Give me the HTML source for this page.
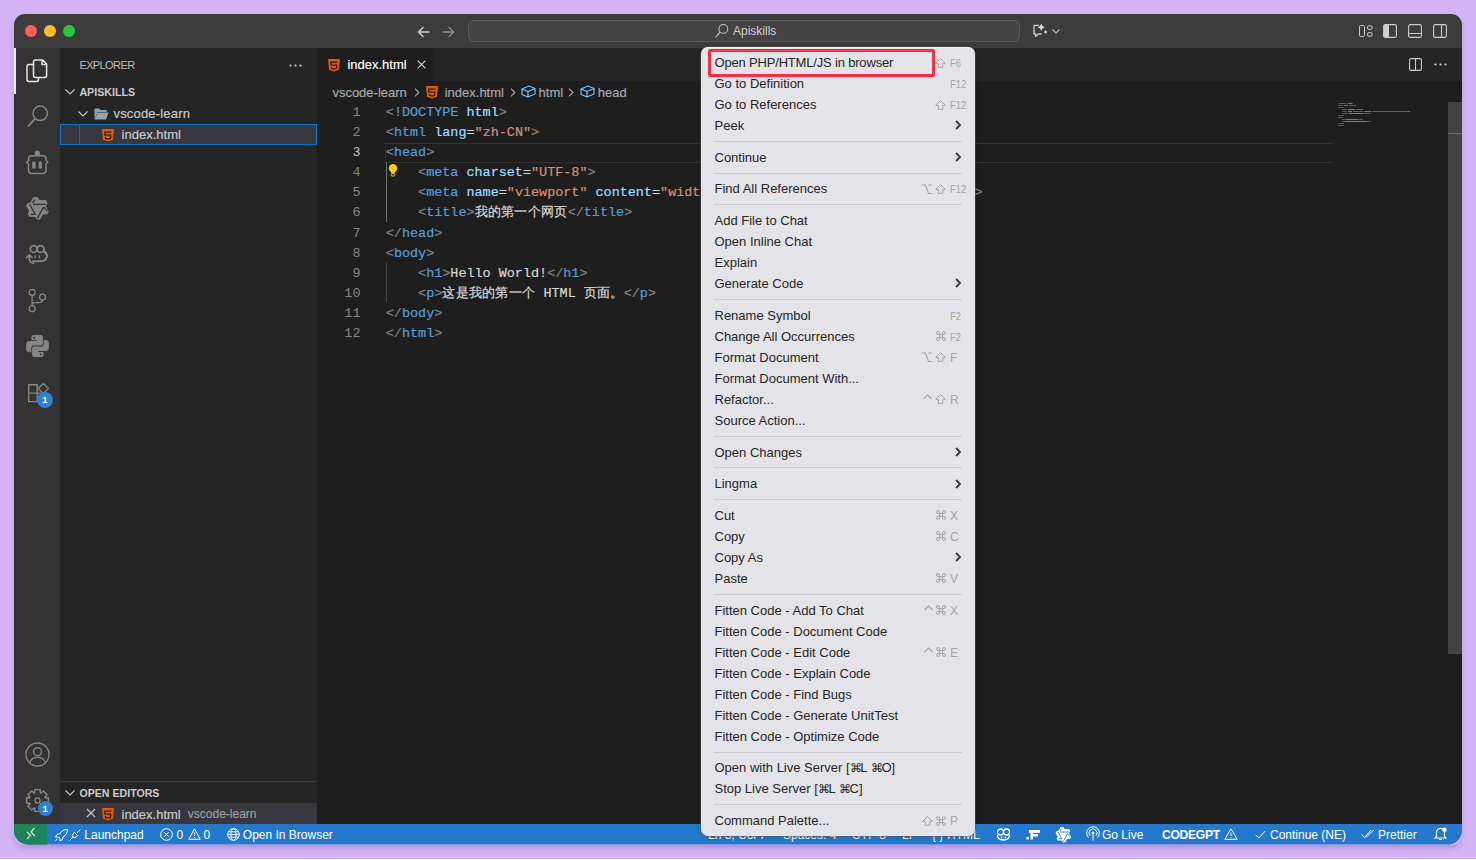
<!DOCTYPE html>
<html><head><meta charset="utf-8"><style>
*{margin:0;padding:0;box-sizing:border-box}
html,body{width:1476px;height:860px;overflow:hidden;background:#d4b4f6;font-family:"Liberation Sans",sans-serif}
.a{position:absolute}
#win{position:absolute;left:0;top:0;width:1476px;height:860px;clip-path:inset(14px 14px 15.4px 14px round 11px 11px 14px 14px)}
svg{position:absolute;overflow:visible}
.dot{position:absolute;width:12px;height:12px;border-radius:50%;top:24.7px}
.mi{position:absolute;left:13.5px;height:21px;line-height:21px;font-size:13px;color:#262626;white-space:pre}
.ks{position:absolute;left:249px;height:21px;line-height:23.2px;font-size:9.4px;transform:scaleY(1.08);color:#a5a4a9;white-space:pre}
.kl{position:absolute;left:249px;height:21px;line-height:23px;font-size:12px;color:#a5a4a9;white-space:pre}
.sep{position:absolute;left:13px;width:248px;height:1px;background:#cdcbd0}
.code{-webkit-text-stroke:.22px currentColor;position:absolute;left:385.8px;font-family:"Liberation Mono",monospace;font-size:13.45px;height:20px;line-height:20px;white-space:pre;color:#d4d4d4}
.ln{position:absolute;width:60px;left:300.5px;text-align:right;font-family:"Liberation Mono",monospace;font-size:13.45px;height:20px;line-height:20px;color:#858585}
.p{color:#808080}.t{color:#569cd6}.at{color:#9cdcfe}.s{color:#ce9178}.w{color:#d4d4d4}
.cj{font-size:13.24px;letter-spacing:.3px}
.st{position:absolute;top:825.2px;height:21px;line-height:21px;font-size:12px;color:#fff;white-space:pre}
.sb{-webkit-text-stroke:.15px currentColor;position:absolute;height:22px;line-height:22px;font-size:13px;color:#cccccc;white-space:pre}
</style></head><body>
<div class="a" style="left:14px;top:14px;width:1448px;height:830.6px;border-radius:11px;box-shadow:0 4px 7px -2px rgba(70,30,110,.3)"></div>
<div id="win">
<div class="a" style="left:0;top:0;width:1476px;height:48px;background:#3c3c3c"></div>
<div class="dot" style="left:24.7px;background:#fe5f57"></div><div class="dot" style="left:43.8px;background:#febc2e"></div><div class="dot" style="left:63px;background:#28c840"></div>
<div class="a" style="left:0;top:48px;width:60px;height:776px;background:#333333"></div>
<div class="a" style="left:14px;top:48px;width:2px;height:46px;background:#e8e8e8"></div>
<div class="a" style="left:60px;top:48px;width:257px;height:776px;background:#252526"></div>
<div class="a" style="left:317px;top:48px;width:1159px;height:33px;background:#252526"></div>
<div class="a" style="left:317px;top:48px;width:117px;height:33px;background:#1e1e1e"></div>
<div class="a" style="left:317px;top:81px;width:1159px;height:743px;background:#1e1e1e"></div>
<div class="a" style="left:0;top:824px;width:1476px;height:36px;background:#2479cc"></div>
<div class="a" style="left:0;top:824px;width:47px;height:36px;background:#1e845a"></div>
<div class="a" style="left:385px;top:143px;width:948px;height:20px;border-top:1px solid #303030;border-bottom:1px solid #303030;border-left:1px solid #303030"></div>
<div class="a" style="left:386px;top:162px;width:1px;height:60px;background:#707070"></div>
<div class="a" style="left:386px;top:262px;width:1px;height:40px;background:#404040"></div>
<div class="ln" style="top:103.2px;color:#858585">1</div><div class="code" style="top:103.2px"><span class="p">&lt;</span><span class="t">!DOCTYPE</span> <span class="at">html</span><span class="p">&gt;</span></div>
<div class="ln" style="top:123.25px;color:#858585">2</div><div class="code" style="top:123.25px"><span class="p">&lt;</span><span class="t">html</span> <span class="at">lang</span>=<span class="s">&quot;zh-CN&quot;</span><span class="p">&gt;</span></div>
<div class="ln" style="top:143.3px;color:#c6c6c6">3</div><div class="code" style="top:143.3px"><span class="p">&lt;</span><span class="t">head</span><span class="p">&gt;</span></div>
<div class="ln" style="top:163.35000000000002px;color:#858585">4</div><div class="code" style="top:163.35000000000002px">    <span class="p">&lt;</span><span class="t">meta</span> <span class="at">charset</span>=<span class="s">&quot;UTF-8&quot;</span><span class="p">&gt;</span></div>
<div class="ln" style="top:183.4px;color:#858585">5</div><div class="code" style="top:183.4px">    <span class="p">&lt;</span><span class="t">meta</span> <span class="at">name</span>=<span class="s">&quot;viewport&quot;</span> <span class="at">content</span>=<span class="s">&quot;width=device-width, initial-scale=1.0&quot;</span><span class="p">&gt;</span></div>
<div class="ln" style="top:203.45px;color:#858585">6</div><div class="code" style="top:203.45px">    <span class="p">&lt;</span><span class="t">title</span><span class="p">&gt;</span><span class="cj">我的第一个网页</span><span class="p">&lt;/</span><span class="t">title</span><span class="p">&gt;</span></div>
<div class="ln" style="top:223.5px;color:#858585">7</div><div class="code" style="top:223.5px"><span class="p">&lt;/</span><span class="t">head</span><span class="p">&gt;</span></div>
<div class="ln" style="top:243.55px;color:#858585">8</div><div class="code" style="top:243.55px"><span class="p">&lt;</span><span class="t">body</span><span class="p">&gt;</span></div>
<div class="ln" style="top:263.6px;color:#858585">9</div><div class="code" style="top:263.6px">    <span class="p">&lt;</span><span class="t">h1</span><span class="p">&gt;</span>Hello World!<span class="p">&lt;/</span><span class="t">h1</span><span class="p">&gt;</span></div>
<div class="ln" style="top:283.65000000000003px;color:#858585">10</div><div class="code" style="top:283.65000000000003px">    <span class="p">&lt;</span><span class="t">p</span><span class="p">&gt;</span><span class="cj">这是我的第一个</span> HTML <span class="cj">页面。</span><span class="p">&lt;/</span><span class="t">p</span><span class="p">&gt;</span></div>
<div class="ln" style="top:303.7px;color:#858585">11</div><div class="code" style="top:303.7px"><span class="p">&lt;/</span><span class="t">body</span><span class="p">&gt;</span></div>
<div class="ln" style="top:323.75px;color:#858585">12</div><div class="code" style="top:323.75px"><span class="p">&lt;/</span><span class="t">html</span><span class="p">&gt;</span></div>
<svg style="left:387.2px;top:163.2px" width="12" height="14" viewBox="0 0 12 14"><path d="M6 1a4.2 4.2 0 0 0-2.6 7.5c.5.5.8 1 .8 1.6h3.6c0-.6.3-1.1.8-1.6A4.2 4.2 0 0 0 6 1z" fill="#ffcc00"/><rect x="4.2" y="10.6" width="3.6" height="2.4" rx=".6" fill="none" stroke="#ffcc00" stroke-width="1"/></svg>
<svg style="left:417px;top:25.7px" width="13" height="12" viewBox="0 0 13 12"><path d="M12.5 6 H1.5 M6.5 1 L1.5 6 L6.5 11" fill="none" stroke="#cccccc" stroke-width="1.3"/></svg><svg style="left:442px;top:25.7px" width="13" height="12" viewBox="0 0 13 12"><path d="M.5 6 H11.5 M6.5 1 L11.5 6 L6.5 11" fill="none" stroke="#8a8a8a" stroke-width="1.3"/></svg>
<div class="a" style="left:468px;top:19.7px;width:552px;height:22.8px;border:1px solid #595959;background:#434343;border-radius:6px"></div>
<svg style="left:715px;top:23px" width="14" height="15" viewBox="0 0 14 15"><circle cx="8.3" cy="5.9" r="4.4" fill="none" stroke="#bdbdbd" stroke-width="1.1"/><path d="M5.2 9 L.6 14.4" stroke="#bdbdbd" stroke-width="1.2"/></svg><div class="a" style="left:733px;top:20px;height:22px;line-height:22px;font-size:12px;color:#d0d0d0;white-space:pre">Apiskills</div>
<svg style="left:1033px;top:23px" width="16" height="15" viewBox="0 0 16 15"><path d="M6 2.4 H1 V11 H2.6 V13.6 L5.2 11 H8.6" fill="none" stroke="#cfcfcf" stroke-width="1.3" stroke-linejoin="round"/><path d="M8.3 .5 Q9 3.6 11.8 4.3 Q9 5 8.3 7.9 Q7.6 5 4.8 4.3 Q7.6 3.6 8.3 .5Z" fill="#dcdcdc"/><path d="M12.6 6.9 Q13 8.4 14.6 8.9 Q13 9.4 12.6 11 Q12.2 9.4 10.6 8.9 Q12.2 8.4 12.6 6.9Z" fill="#dcdcdc"/></svg><svg style="left:1052px;top:29px" width="8" height="5" viewBox="0 0 8 5"><path d="M.5 .5 L4 4 L7.5 .5" fill="none" stroke="#bdbdbd" stroke-width="1.1"/></svg>
<svg style="left:1359px;top:25px" width="14" height="12" viewBox="0 0 14 12"><rect x=".5" y=".5" width="5" height="11" rx="1.2" fill="none" stroke="#cccccc" stroke-width="1"/><rect x="8.5" y=".8" width="4.6" height="3.6" rx="1.4" fill="none" stroke="#cccccc" stroke-width="1"/><rect x="8.5" y="7.6" width="4.6" height="3.6" rx="1.4" fill="none" stroke="#cccccc" stroke-width="1"/></svg><svg style="left:1383px;top:24px" width="14" height="14" viewBox="0 0 14 14"><rect x=".6" y=".6" width="12.8" height="12.8" rx="1.6" fill="none" stroke="#cccccc" stroke-width="1.1"/><rect x="1" y="1" width="5" height="12" fill="#cccccc"/></svg><svg style="left:1408px;top:24px" width="14" height="14" viewBox="0 0 14 14"><rect x=".6" y=".6" width="12.8" height="12.8" rx="1.6" fill="none" stroke="#cccccc" stroke-width="1.1"/><path d="M1 9.5 H13" stroke="#cccccc" stroke-width="1.1"/></svg><svg style="left:1433px;top:24px" width="14" height="14" viewBox="0 0 14 14"><rect x=".6" y=".6" width="12.8" height="12.8" rx="1.6" fill="none" stroke="#cccccc" stroke-width="1.1"/><path d="M8.5 1 V13" stroke="#cccccc" stroke-width="1.1"/></svg>
<svg style="left:26px;top:59px" width="22" height="24" viewBox="0 0 22 24"><path d="M7.5 5.5 H3 Q1 5.5 1 7.5 V20.5 Q1 22.5 3 22.5 H10.5 Q12.5 22.5 12.5 20.5 V18.5" fill="none" stroke="#e6e6e6" stroke-width="1.5"/><path d="M9.5 .9 H16.5 L20.6 5 V16.5 Q20.6 18.5 18.6 18.5 H9.5 Q7.5 18.5 7.5 16.5 V2.9 Q7.5 .9 9.5 .9Z M16 1 V5.5 H20.5" fill="none" stroke="#e6e6e6" stroke-width="1.5" stroke-linejoin="round"/></svg>
<svg style="left:27px;top:105px" width="22" height="23" viewBox="0 0 22 23"><circle cx="13.2" cy="8.3" r="7.2" fill="none" stroke="#858585" stroke-width="1.5"/><path d="M8 13.6 L1 21.6" stroke="#858585" stroke-width="1.6"/></svg>
<svg style="left:26px;top:150px" width="23" height="25" viewBox="0 0 23 25"><circle cx="11.3" cy="3" r="2.6" fill="#858585"/><path d="M5.5 5.8 H17 Q20 5.8 20 8.8 V10.5 L21.8 12.2 L20 14 V20 Q20 23.5 17 23.5 H5.5 Q2.5 23.5 2.5 20 V14 L.8 12.2 L2.5 10.5 V8.8 Q2.5 5.8 5.5 5.8Z" fill="none" stroke="#858585" stroke-width="1.5" stroke-linejoin="round"/><rect x="6.2" y="11.2" width="3.4" height="7.6" rx="1.6" fill="#858585"/><rect x="12.6" y="11.2" width="3.4" height="7.6" rx="1.6" fill="#858585"/></svg>
<svg style="left:24px;top:194px" width="28" height="30" viewBox="0 0 28 30"><path d="M9.4 3.1 L14 3.3 L15.2 5.9 L22.3 6.2 L23.6 9.4 L21.8 12.3 L24.8 17.4 L23.2 20.6 L18.8 20.6 L16.4 25.5 L13 25.8 L11.3 23 L5.2 22.8 L3.7 19.6 L5.2 17.1 L2 11.9 L3.7 8.9 L6.3 8.4 Z" fill="#858585"/><path d="M8.6 9 L10.7 5.6 M9 10.4 H21.6 M5.6 10.2 L11.2 20.3 H6.6 M19.6 13.2 L13.4 24.3 M19.6 13.2 L23.5 17" fill="none" stroke="#333333" stroke-width="1.3"/></svg>
<svg style="left:23px;top:240px" width="28" height="28" viewBox="0 0 28 28"><circle cx="10.7" cy="9.1" r="3.4" fill="none" stroke="#858585" stroke-width="1.7"/><circle cx="17.6" cy="9.1" r="3.4" fill="none" stroke="#858585" stroke-width="1.7"/><path d="M20.6 11.2 Q24.3 13 23.9 16.8 Q23.3 21.2 16 21.3 H10" fill="none" stroke="#858585" stroke-width="1.9" stroke-linecap="round"/><path d="M6.3 15.6 V19 Q6.6 22.6 10.6 23.4" fill="none" stroke="#858585" stroke-width="1.7" stroke-linecap="round"/><path d="M3.4 17.6 L6.3 15 L9.1 17.4" fill="none" stroke="#858585" stroke-width="1.7" stroke-linecap="round" stroke-linejoin="round"/><rect x="11.4" y="15.2" width="1.5" height="3.1" rx=".7" fill="#858585"/><rect x="15.6" y="15.2" width="1.5" height="3.1" rx=".7" fill="#858585"/></svg>
<svg style="left:27px;top:287px" width="20" height="26" viewBox="0 0 20 26"><circle cx="5.1" cy="5.4" r="3" fill="none" stroke="#858585" stroke-width="1.3"/><circle cx="15.5" cy="10.1" r="3" fill="none" stroke="#858585" stroke-width="1.3"/><circle cx="5.1" cy="21.7" r="3" fill="none" stroke="#858585" stroke-width="1.3"/><path d="M5.1 8.4 V18.7 M15.5 13.1 Q15.5 15.6 12.5 15.6 H8 Q5.1 15.6 5.1 18.7" fill="none" stroke="#858585" stroke-width="1.3"/></svg>
<svg style="left:23px;top:332px" width="28" height="28" viewBox="0 0 28 28"><path d="M10.5 3.1 H17.9 Q19.9 3.1 19.9 5.1 V11.6 Q19.9 13.6 17.9 13.6 H10.6 Q8.3 13.6 8.3 15.9 V20.2 H6.3 Q3.1 20.2 3.1 16.2 V12.6 Q3.1 9.1 6.6 9.1 H13.9 V8.3 H8.5 V5.1 Q8.5 3.1 10.5 3.1 Z" fill="#858585"/><path d="M10.5 3.1 H17.9 Q19.9 3.1 19.9 5.1 V11.6 Q19.9 13.6 17.9 13.6 H10.6 Q8.3 13.6 8.3 15.9 V20.2 H6.3 Q3.1 20.2 3.1 16.2 V12.6 Q3.1 9.1 6.6 9.1 H13.9 V8.3 H8.5 V5.1 Q8.5 3.1 10.5 3.1 Z" fill="#858585" transform="rotate(180 14.5 14.1)"/><circle cx="11.2" cy="5.8" r="1" fill="#333333"/><circle cx="17.8" cy="22.4" r="1" fill="#333333"/></svg>
<svg style="left:28px;top:383px" width="22" height="20" viewBox="0 0 22 20"><path d="M.7 1.7 H9.2 V18.6 H.7 Z M.7 10.1 H17.5 V18.6 H9.2" fill="none" stroke="#858585" stroke-width="1.4"/><path d="M15.3 .5 L20.3 5.5 L15.3 10.5 L10.3 5.5 Z" fill="none" stroke="#858585" stroke-width="1.4" stroke-linejoin="round"/></svg>
<div class="a" style="left:37px;top:392.3px;width:16px;height:16px;border-radius:50%;background:#2f7fd6;color:#fff;font-size:9.5px;font-weight:bold;text-align:center;line-height:16px">1</div>
<svg style="left:25px;top:742px" width="25" height="25" viewBox="0 0 25 25"><circle cx="12.5" cy="12.5" r="11.5" fill="none" stroke="#858585" stroke-width="1.4"/><circle cx="12.5" cy="9.8" r="4" fill="none" stroke="#858585" stroke-width="1.4"/><path d="M4.8 20.8 Q6.5 15.2 12.5 15.2 Q18.5 15.2 20.2 20.8" fill="none" stroke="#858585" stroke-width="1.4"/></svg>
<svg style="left:24.6px;top:788.2px" width="25" height="25" viewBox="0 0 25 25"><path d="M23.37 9.79 L23.37 15.21 L20.21 15.30 L19.93 15.97 L22.10 18.27 L18.27 22.10 L15.97 19.93 L15.30 20.21 L15.21 23.37 L9.79 23.37 L9.70 20.21 L9.03 19.93 L6.73 22.10 L2.90 18.27 L5.07 15.97 L4.79 15.30 L1.63 15.21 L1.63 9.79 L4.79 9.70 L5.07 9.03 L2.90 6.73 L6.73 2.90 L9.03 5.07 L9.70 4.79 L9.79 1.63 L15.21 1.63 L15.30 4.79 L15.97 5.07 L18.27 2.90 L22.10 6.73 L19.93 9.03 L20.21 9.70Z" fill="none" stroke="#858585" stroke-width="1.4" stroke-linejoin="round"/><circle cx="12.5" cy="12.5" r="2.6" fill="none" stroke="#858585" stroke-width="1.4"/></svg>
<div class="a" style="left:37.7px;top:800.7px;width:15px;height:15px;border-radius:50%;background:#2f7fd6;color:#fff;font-size:9.5px;font-weight:bold;text-align:center;line-height:15px">1</div>
<div class="a" style="left:79.4px;top:54px;height:22px;line-height:22px;font-size:11px;letter-spacing:-.6px;color:#bbbbbb;white-space:pre">EXPLORER</div>
<svg style="left:289px;top:64px" width="13" height="3" viewBox="0 0 13 3"><circle cx="1.5" cy="1.5" r="1.1" fill="#cccccc"/><circle cx="6.5" cy="1.5" r="1.1" fill="#cccccc"/><circle cx="11.5" cy="1.5" r="1.1" fill="#cccccc"/></svg>
<svg style="left:65px;top:89px" width="10" height="6" viewBox="0 0 10 6"><path d="M.5 .5 L5 5 L9.5 .5" fill="none" stroke="#c5c5c5" stroke-width="1.1"/></svg><div class="a" style="left:79.4px;top:81px;height:22px;line-height:22px;font-size:10.7px;font-weight:bold;color:#cccccc;white-space:pre">APISKILLS</div>
<svg style="left:77.5px;top:110.5px" width="10" height="6" viewBox="0 0 10 6"><path d="M.5 .5 L5 5 L9.5 .5" fill="none" stroke="#c5c5c5" stroke-width="1.1"/></svg><svg style="left:93.5px;top:107.5px" width="15" height="12" viewBox="0 0 15 12"><path d="M.5 1.2 Q.5 .5 1.2 .5 H5 L6.5 2 H12 Q12.8 2 12.8 2.8 V4 H3.5 L.5 11.5 Z" fill="#90a4ae"/><path d="M3.6 4.6 H14.6 L12 11.5 H.6 Z" fill="#90a4ae"/></svg>
<div class="sb" style="left:113.5px;top:103px;letter-spacing:.18px">vscode-learn</div>
<div class="a" style="left:60px;top:124px;width:257px;height:21px;background:#37373d;border:1px solid #0078d4"></div>
<div class="a" style="left:79px;top:125px;width:1px;height:19px;background:#585858"></div>
<svg style="left:102px;top:128.5px" width="12" height="12.5" viewBox="0 0 12 12.5"><path d="M.6 0 H11.4 Q12 0 11.9 .6 L11 10.7 L6 12.5 L1 10.7 L.1 .6 Q0 0 .6 0Z" fill="#e5590f"/><path d="M9.6 3.2 H2.9 V6.1 H8.7 V8.4 Q8.7 9.9 5.9 9.9 Q3.1 9.9 3.1 8.3" fill="none" stroke="#1e1e1e" stroke-width="1.25"/></svg><div class="sb" style="left:121.6px;top:124px;color:#cccccc">index.html</div>
<div class="a" style="left:60px;top:781px;width:257px;height:1px;background:#3c3c3c"></div>
<svg style="left:65px;top:789.5px" width="10" height="6" viewBox="0 0 10 6"><path d="M.5 .5 L5 5 L9.5 .5" fill="none" stroke="#c5c5c5" stroke-width="1.1"/></svg><div class="a" style="left:79.5px;top:781.5px;height:22px;line-height:22px;font-size:10.6px;font-weight:bold;color:#cccccc;white-space:pre">OPEN EDITORS</div>
<div class="a" style="left:60px;top:802.5px;width:257px;height:21.5px;background:#37373d"></div>
<svg style="left:86px;top:808px" width="10" height="10" viewBox="0 0 10 10"><path d="M1 1 L9 9 M9 1 L1 9" stroke="#c5c5c5" stroke-width="1.1"/></svg><svg style="left:102px;top:807.5px" width="12" height="12.5" viewBox="0 0 12 12.5"><path d="M.6 0 H11.4 Q12 0 11.9 .6 L11 10.7 L6 12.5 L1 10.7 L.1 .6 Q0 0 .6 0Z" fill="#e5590f"/><path d="M9.6 3.2 H2.9 V6.1 H8.7 V8.4 Q8.7 9.9 5.9 9.9 Q3.1 9.9 3.1 8.3" fill="none" stroke="#1e1e1e" stroke-width="1.25"/></svg><div class="sb" style="left:121.5px;top:803.5px">index.html</div><div class="sb" style="left:187.8px;top:803px;font-size:12px;color:#9d9d9d">vscode-learn</div>
<svg style="left:328.4px;top:58.7px" width="12" height="12.5" viewBox="0 0 12 12.5"><path d="M.6 0 H11.4 Q12 0 11.9 .6 L11 10.7 L6 12.5 L1 10.7 L.1 .6 Q0 0 .6 0Z" fill="#e5590f"/><path d="M9.6 3.2 H2.9 V6.1 H8.7 V8.4 Q8.7 9.9 5.9 9.9 Q3.1 9.9 3.1 8.3" fill="none" stroke="#1e1e1e" stroke-width="1.25"/></svg><div class="sb" style="left:347.4px;top:54px;color:#ffffff">index.html</div>
<svg style="left:416.5px;top:60px" width="9" height="9" viewBox="0 0 9 9"><path d="M.6 .6 L8.4 8.4 M8.4 .6 L.6 8.4" stroke="#cccccc" stroke-width="1.2"/></svg>
<svg style="left:1409px;top:57.5px" width="13" height="13" viewBox="0 0 13 13"><rect x=".6" y=".6" width="11.8" height="11.8" rx="1.4" fill="none" stroke="#cccccc" stroke-width="1.1"/><path d="M6.5 1 V12" stroke="#cccccc" stroke-width="1.1"/></svg>
<svg style="left:1433.5px;top:62.6px" width="13" height="3" viewBox="0 0 13 3"><circle cx="1.5" cy="1.5" r="1.1" fill="#cccccc"/><circle cx="6.5" cy="1.5" r="1.1" fill="#cccccc"/><circle cx="11.5" cy="1.5" r="1.1" fill="#cccccc"/></svg>
<div class="sb" style="left:332.4px;top:81.8px;color:#a9a9a9">vscode-learn</div><svg style="left:413.5px;top:88px" width="6" height="9" viewBox="0 0 6 9"><path d="M1 .6 L4.8 4.5 L1 8.4" fill="none" stroke="#a9a9a9" stroke-width="1.1"/></svg><svg style="left:426px;top:86px" width="12" height="12.5" viewBox="0 0 12 12.5"><path d="M.6 0 H11.4 Q12 0 11.9 .6 L11 10.7 L6 12.5 L1 10.7 L.1 .6 Q0 0 .6 0Z" fill="#e5590f"/><path d="M9.6 3.2 H2.9 V6.1 H8.7 V8.4 Q8.7 9.9 5.9 9.9 Q3.1 9.9 3.1 8.3" fill="none" stroke="#1e1e1e" stroke-width="1.25"/></svg><div class="sb" style="left:444.7px;top:81.8px;color:#a9a9a9">index.html</div><svg style="left:510px;top:88px" width="6" height="9" viewBox="0 0 6 9"><path d="M1 .6 L4.8 4.5 L1 8.4" fill="none" stroke="#a9a9a9" stroke-width="1.1"/></svg><svg style="left:520.5px;top:85px" width="15" height="13" viewBox="0 0 15 13"><path d="M1 4 L8 1 L14 3.5 L14 9 L7 12 L1 9.5 Z M1 4 L7 6.5 L14 3.5 M7 6.5 V12" fill="none" stroke="#75beff" stroke-width="1.2" stroke-linejoin="round"/></svg><div class="sb" style="left:538.6px;top:81.8px;color:#a9a9a9">html</div><svg style="left:568px;top:88px" width="6" height="9" viewBox="0 0 6 9"><path d="M1 .6 L4.8 4.5 L1 8.4" fill="none" stroke="#a9a9a9" stroke-width="1.1"/></svg><svg style="left:580px;top:85px" width="15" height="13" viewBox="0 0 15 13"><path d="M1 4 L8 1 L14 3.5 L14 9 L7 12 L1 9.5 Z M1 4 L7 6.5 L14 3.5 M7 6.5 V12" fill="none" stroke="#75beff" stroke-width="1.2" stroke-linejoin="round"/></svg><div class="sb" style="left:597.8px;top:81.8px;color:#a9a9a9">head</div>
<div class="a" style="left:1448px;top:102px;width:14px;height:552px;background:#424242"></div>
<div class="a" style="left:1448px;top:133px;width:14px;height:1px;background:#6a6a6a"></div>
<div class="a" style="left:1338.0px;top:102.5px;width:1.0px;height:1.5px;background:#808080;opacity:.5"></div><div class="a" style="left:1339.0px;top:102.5px;width:8.0px;height:1.5px;background:#569cd6;opacity:.5"></div><div class="a" style="left:1348.0px;top:102.5px;width:4.0px;height:1.5px;background:#9cdcfe;opacity:.5"></div><div class="a" style="left:1352.0px;top:102.5px;width:1.0px;height:1.5px;background:#808080;opacity:.5"></div><div class="a" style="left:1338.0px;top:104.5px;width:1.0px;height:1.5px;background:#808080;opacity:.5"></div><div class="a" style="left:1339.0px;top:104.5px;width:4.0px;height:1.5px;background:#569cd6;opacity:.5"></div><div class="a" style="left:1344.0px;top:104.5px;width:4.0px;height:1.5px;background:#9cdcfe;opacity:.5"></div><div class="a" style="left:1349.0px;top:104.5px;width:7.0px;height:1.5px;background:#ce9178;opacity:.5"></div><div class="a" style="left:1338.0px;top:106.5px;width:1.0px;height:1.5px;background:#808080;opacity:.5"></div><div class="a" style="left:1339.0px;top:106.5px;width:4.0px;height:1.5px;background:#569cd6;opacity:.5"></div><div class="a" style="left:1343.0px;top:106.5px;width:1.0px;height:1.5px;background:#808080;opacity:.5"></div><div class="a" style="left:1342.0px;top:108.5px;width:1.0px;height:1.5px;background:#808080;opacity:.5"></div><div class="a" style="left:1343.0px;top:108.5px;width:4.0px;height:1.5px;background:#569cd6;opacity:.5"></div><div class="a" style="left:1348.0px;top:108.5px;width:7.0px;height:1.5px;background:#9cdcfe;opacity:.5"></div><div class="a" style="left:1356.0px;top:108.5px;width:7.0px;height:1.5px;background:#ce9178;opacity:.5"></div><div class="a" style="left:1342.0px;top:110.5px;width:1.0px;height:1.5px;background:#808080;opacity:.5"></div><div class="a" style="left:1343.0px;top:110.5px;width:4.0px;height:1.5px;background:#569cd6;opacity:.5"></div><div class="a" style="left:1348.0px;top:110.5px;width:4.0px;height:1.5px;background:#9cdcfe;opacity:.5"></div><div class="a" style="left:1353.0px;top:110.5px;width:10.0px;height:1.5px;background:#ce9178;opacity:.5"></div><div class="a" style="left:1364.0px;top:110.5px;width:7.0px;height:1.5px;background:#9cdcfe;opacity:.5"></div><div class="a" style="left:1372.0px;top:110.5px;width:38.0px;height:1.5px;background:#ce9178;opacity:.5"></div><div class="a" style="left:1342.0px;top:112.5px;width:1.0px;height:1.5px;background:#808080;opacity:.5"></div><div class="a" style="left:1343.0px;top:112.5px;width:5.0px;height:1.5px;background:#569cd6;opacity:.5"></div><div class="a" style="left:1349.0px;top:112.5px;width:14.0px;height:1.5px;background:#d4d4d4;opacity:.5"></div><div class="a" style="left:1363.0px;top:112.5px;width:8.0px;height:1.5px;background:#569cd6;opacity:.5"></div><div class="a" style="left:1338.0px;top:114.5px;width:2.0px;height:1.5px;background:#808080;opacity:.5"></div><div class="a" style="left:1340.0px;top:114.5px;width:4.0px;height:1.5px;background:#569cd6;opacity:.5"></div><div class="a" style="left:1338.0px;top:116.5px;width:1.0px;height:1.5px;background:#808080;opacity:.5"></div><div class="a" style="left:1339.0px;top:116.5px;width:4.0px;height:1.5px;background:#569cd6;opacity:.5"></div><div class="a" style="left:1342.0px;top:118.5px;width:4.0px;height:1.5px;background:#569cd6;opacity:.5"></div><div class="a" style="left:1346.0px;top:118.5px;width:12.0px;height:1.5px;background:#d4d4d4;opacity:.5"></div><div class="a" style="left:1358.0px;top:118.5px;width:5.0px;height:1.5px;background:#569cd6;opacity:.5"></div><div class="a" style="left:1342.0px;top:120.5px;width:3.0px;height:1.5px;background:#569cd6;opacity:.5"></div><div class="a" style="left:1345.0px;top:120.5px;width:22.0px;height:1.5px;background:#d4d4d4;opacity:.5"></div><div class="a" style="left:1367.0px;top:120.5px;width:4.0px;height:1.5px;background:#569cd6;opacity:.5"></div><div class="a" style="left:1338.0px;top:122.5px;width:2.0px;height:1.5px;background:#808080;opacity:.5"></div><div class="a" style="left:1340.0px;top:122.5px;width:4.0px;height:1.5px;background:#569cd6;opacity:.5"></div><div class="a" style="left:1338.0px;top:124.5px;width:2.0px;height:1.5px;background:#808080;opacity:.5"></div><div class="a" style="left:1340.0px;top:124.5px;width:4.0px;height:1.5px;background:#569cd6;opacity:.5"></div>
<svg style="left:25px;top:827px" width="12" height="13" viewBox="0 0 12 13"><path d="M2.3 5.3 L5.6 8.5 L2.3 11.6 M9 1.4 L6.1 5 L9.3 8.5" fill="none" stroke="#cfe6da" stroke-width="1.3" stroke-linecap="round" stroke-linejoin="round"/></svg>
<svg style="left:55px;top:828.5px" width="13" height="12" viewBox="0 0 13 12"><path d="M12.5 .5 Q7 .5 4.5 5 L2 5.5 L.5 8 L3.5 8 L5 9.5 L5 12 L7.5 10.5 L8 8 Q12.5 5.5 12.5 .5Z M2.5 10 L.5 11.5" fill="none" stroke="#fff" stroke-width="1"/></svg><svg style="left:69px;top:828.5px" width="12" height="12" viewBox="0 0 12 12"><path d="M11.5 .5 L8 4 M4.5 7.5 L.5 11.5 M5.5 3.5 L8.5 6.5 L7 8 Q5.5 9.5 4 8 Q2.5 6.5 4 5 Z" fill="none" stroke="#fff" stroke-width="1"/></svg><div class="st" style="left:84.3px">Launchpad</div>
<svg style="left:160px;top:827.5px" width="13" height="13" viewBox="0 0 13 13"><circle cx="6.5" cy="6.5" r="5.8" fill="none" stroke="#fff" stroke-width="1"/><path d="M4.3 4.3 L8.7 8.7 M8.7 4.3 L4.3 8.7" stroke="#fff" stroke-width="1"/></svg><div class="st" style="left:176.5px">0</div><svg style="left:187.5px;top:828px" width="13" height="12" viewBox="0 0 13 12"><path d="M6.5 .8 L12.2 11.3 H.8 Z M6.5 4.5 V8 M6.5 9.2 V10" fill="none" stroke="#fff" stroke-width="1" stroke-linejoin="round"/></svg><div class="st" style="left:203.5px">0</div>
<svg style="left:227px;top:827.5px" width="13" height="13" viewBox="0 0 13 13"><circle cx="6.5" cy="6.5" r="5.8" fill="none" stroke="#fff" stroke-width="1"/><ellipse cx="6.5" cy="6.5" rx="2.6" ry="5.8" fill="none" stroke="#fff" stroke-width="1"/><path d="M.7 6.5 H12.3 M1.5 3.8 H11.5 M1.5 9.2 H11.5" stroke="#fff" stroke-width=".9"/></svg><div class="st" style="left:242.8px">Open In Browser</div>
<div class="st" style="left:708px">Ln 3, Col 7</div><div class="st" style="left:783px">Spaces: 4</div><div class="st" style="left:852px">UTF-8</div><div class="st" style="left:902px">LF</div><div class="st" style="left:932px">{ }</div><div class="st" style="left:947px">HTML</div>
<svg style="left:996px;top:828px" width="15" height="13" viewBox="0 0 15 13"><circle cx="4.5" cy="4" r="3" fill="none" stroke="#fff" stroke-width="1.3"/><circle cx="10.5" cy="4" r="3" fill="none" stroke="#fff" stroke-width="1.3"/><path d="M1.5 7 Q1.5 12 7.5 12 Q13.5 12 13.5 7" fill="none" stroke="#fff" stroke-width="1.3"/><path d="M5.7 8.5 V10.5 M9.3 8.5 V10.5" stroke="#fff" stroke-width="1.2"/></svg><svg style="left:1026px;top:829px" width="15" height="11" viewBox="0 0 15 11"><path d="M3 1 H14 V4 H7 V5 H12 V7.5 H7 V10.5 H4.5 V4 H3Z" fill="#fff"/><rect x=".5" y="8" width="2.5" height="2.5" fill="#fff"/></svg><svg style="left:1055px;top:827px" width="17" height="16" viewBox="2 3 23.5 23.5"><path d="M9.4 3.1 L14 3.3 L15.2 5.9 L22.3 6.2 L23.6 9.4 L21.8 12.3 L24.8 17.4 L23.2 20.6 L18.8 20.6 L16.4 25.5 L13 25.8 L11.3 23 L5.2 22.8 L3.7 19.6 L5.2 17.1 L2 11.9 L3.7 8.9 L6.3 8.4 Z" fill="#ffffff"/><path d="M8.6 9 L10.7 5.6 M9 10.4 H21.6 M5.6 10.2 L11.2 20.3 H6.6 M19.6 13.2 L13.4 24.3 M19.6 13.2 L23.5 17" fill="none" stroke="#2479cc" stroke-width="1.3"/></svg>
<svg style="left:1087px;top:828px" width="12" height="13" viewBox="0 0 12 13"><circle cx="6" cy="5" r="1.5" fill="#fff"/><path d="M3.2 7.8 A4 4 0 1 1 8.8 7.8 M1.5 9.5 A6.3 6.3 0 1 1 10.5 9.5 M6 6.5 V12.5" fill="none" stroke="#fff" stroke-width="1"/></svg><div class="st" style="left:1102px">Go Live</div>
<div class="st" style="left:1162px;font-weight:bold;letter-spacing:-.2px;font-size:12px">CODEGPT</div><svg style="left:1224px;top:828px" width="14" height="12" viewBox="0 0 14 12"><path d="M7 .8 L13.2 11.3 H.8 Z M7 4.5 V8 M7 9.2 V10" fill="none" stroke="#fff" stroke-width="1" stroke-linejoin="round"/></svg>
<svg style="left:1255px;top:830px" width="11" height="9" viewBox="0 0 11 9"><path d="M.6 4.8 L3.8 8 L10.4 .8" fill="none" stroke="#fff" stroke-width="1"/></svg><div class="st" style="left:1270px">Continue (NE)</div>
<svg style="left:1361px;top:829px" width="14" height="10" viewBox="0 0 14 10"><path d="M.6 5.5 L3.5 8.5 L10 1 M5 8.5 L12.5 1" fill="none" stroke="#fff" stroke-width="1"/></svg><div class="st" style="left:1378px">Prettier</div>
<svg style="left:1434px;top:827px" width="13" height="14" viewBox="0 0 13 14"><path d="M6.5 1.5 Q2.5 1.5 2.5 6 V9.5 L1 11 H12 L10.5 9.5 V6 Q10.5 1.5 6.5 1.5Z M5 12.5 H8" fill="none" stroke="#fff" stroke-width="1.1"/><circle cx="10.5" cy="2.8" r="2.2" fill="#fff"/></svg>
</div>
<div id="menu" class="a" style="left:701px;top:47px;width:274px;height:788.5px;background:#e4e3e8;border-radius:7px;box-shadow:inset 0 1px 0 rgba(255,255,255,.5),0 0 0 .7px rgba(90,90,90,.6),0 2px 6px rgba(0,0,0,.15)">
<div class="mi" style="top:5.00px;letter-spacing:-.18px">Open PHP/HTML/JS in browser</div><div class="ks" style="top:5.00px">F6</div><svg style="left:234.0px;top:10.50px" width="11" height="10" viewBox="0 0 11 10"><path d="M5.5 .5 L10.3 5.3 H7.8 V9.3 H3.2 V5.3 H.7 Z" fill="none" stroke="#a5a4a9" stroke-width="1" stroke-linejoin="round"/></svg>
<div class="mi" style="top:26.00px">Go to Definition</div><div class="ks" style="top:26.00px">F12</div>
<div class="mi" style="top:47.00px">Go to References</div><div class="ks" style="top:47.00px">F12</div><svg style="left:234.0px;top:52.50px" width="11" height="10" viewBox="0 0 11 10"><path d="M5.5 .5 L10.3 5.3 H7.8 V9.3 H3.2 V5.3 H.7 Z" fill="none" stroke="#a5a4a9" stroke-width="1" stroke-linejoin="round"/></svg>
<div class="mi" style="top:68.00px">Peek</div><svg style="left:254px;top:73.30px" width="6" height="10" viewBox="0 0 6 10"><path d="M1.1 1 L5 5 L1.1 9" fill="none" stroke="#38383a" stroke-width="1.85"/></svg>
<div class="sep" style="top:93.90px"></div>
<div class="mi" style="top:99.70px">Continue</div><svg style="left:254px;top:105.00px" width="6" height="10" viewBox="0 0 6 10"><path d="M1.1 1 L5 5 L1.1 9" fill="none" stroke="#38383a" stroke-width="1.85"/></svg>
<div class="sep" style="top:125.60px"></div>
<div class="mi" style="top:131.40px">Find All References</div><div class="ks" style="top:131.40px">F12</div><svg style="left:234.0px;top:136.90px" width="11" height="10" viewBox="0 0 11 10"><path d="M5.5 .5 L10.3 5.3 H7.8 V9.3 H3.2 V5.3 H.7 Z" fill="none" stroke="#a5a4a9" stroke-width="1" stroke-linejoin="round"/></svg><svg style="left:221.0px;top:136.90px" width="10" height="10" viewBox="0 0 10 10"><path d="M0 1 H3.5 L6.5 9.5 H10 M6.5 1 H10" fill="none" stroke="#a5a4a9" stroke-width="1.1"/></svg>
<div class="sep" style="top:157.30px"></div>
<div class="mi" style="top:163.10px">Add File to Chat</div>
<div class="mi" style="top:184.10px">Open Inline Chat</div>
<div class="mi" style="top:205.10px">Explain</div>
<div class="mi" style="top:226.10px">Generate Code</div><svg style="left:254px;top:231.40px" width="6" height="10" viewBox="0 0 6 10"><path d="M1.1 1 L5 5 L1.1 9" fill="none" stroke="#38383a" stroke-width="1.85"/></svg>
<div class="sep" style="top:252.00px"></div>
<div class="mi" style="top:257.80px">Rename Symbol</div><div class="ks" style="top:257.80px">F2</div>
<div class="mi" style="top:278.80px">Change All Occurrences</div><div class="ks" style="top:278.80px">F2</div><svg style="left:235.0px;top:284.30px" width="10" height="10" viewBox="0 0 10 10"><path d="M3.5 3.5 H6.5 V6.5 H3.5 Z M3.5 3.5 V2 A1.5 1.5 0 1 0 2 3.5 H3.5 M6.5 3.5 V2 A1.5 1.5 0 1 1 8 3.5 H6.5 M3.5 6.5 V8 A1.5 1.5 0 1 1 2 6.5 H3.5 M6.5 6.5 V8 A1.5 1.5 0 1 0 8 6.5 H6.5" fill="none" stroke="#a5a4a9" stroke-width="1"/></svg>
<div class="mi" style="top:299.80px">Format Document</div><div class="kl" style="top:299.80px">F</div><svg style="left:234.0px;top:305.30px" width="11" height="10" viewBox="0 0 11 10"><path d="M5.5 .5 L10.3 5.3 H7.8 V9.3 H3.2 V5.3 H.7 Z" fill="none" stroke="#a5a4a9" stroke-width="1" stroke-linejoin="round"/></svg><svg style="left:221.0px;top:305.30px" width="10" height="10" viewBox="0 0 10 10"><path d="M0 1 H3.5 L6.5 9.5 H10 M6.5 1 H10" fill="none" stroke="#a5a4a9" stroke-width="1.1"/></svg>
<div class="mi" style="top:320.80px">Format Document With...</div>
<div class="mi" style="top:341.80px">Refactor...</div><div class="kl" style="top:341.80px">R</div><svg style="left:234.0px;top:347.30px" width="11" height="10" viewBox="0 0 11 10"><path d="M5.5 .5 L10.3 5.3 H7.8 V9.3 H3.2 V5.3 H.7 Z" fill="none" stroke="#a5a4a9" stroke-width="1" stroke-linejoin="round"/></svg><svg style="left:222.0px;top:347.30px" width="9" height="10" viewBox="0 0 9 10"><path d="M.5 5 L4.5 1 L8.5 5" fill="none" stroke="#a5a4a9" stroke-width="1.1"/></svg>
<div class="mi" style="top:362.80px">Source Action...</div>
<div class="sep" style="top:388.70px"></div>
<div class="mi" style="top:394.50px">Open Changes</div><svg style="left:254px;top:399.80px" width="6" height="10" viewBox="0 0 6 10"><path d="M1.1 1 L5 5 L1.1 9" fill="none" stroke="#38383a" stroke-width="1.85"/></svg>
<div class="sep" style="top:420.40px"></div>
<div class="mi" style="top:426.20px">Lingma</div><svg style="left:254px;top:431.50px" width="6" height="10" viewBox="0 0 6 10"><path d="M1.1 1 L5 5 L1.1 9" fill="none" stroke="#38383a" stroke-width="1.85"/></svg>
<div class="sep" style="top:452.10px"></div>
<div class="mi" style="top:457.90px">Cut</div><div class="kl" style="top:457.90px">X</div><svg style="left:235.0px;top:463.40px" width="10" height="10" viewBox="0 0 10 10"><path d="M3.5 3.5 H6.5 V6.5 H3.5 Z M3.5 3.5 V2 A1.5 1.5 0 1 0 2 3.5 H3.5 M6.5 3.5 V2 A1.5 1.5 0 1 1 8 3.5 H6.5 M3.5 6.5 V8 A1.5 1.5 0 1 1 2 6.5 H3.5 M6.5 6.5 V8 A1.5 1.5 0 1 0 8 6.5 H6.5" fill="none" stroke="#a5a4a9" stroke-width="1"/></svg>
<div class="mi" style="top:478.90px">Copy</div><div class="kl" style="top:478.90px">C</div><svg style="left:235.0px;top:484.40px" width="10" height="10" viewBox="0 0 10 10"><path d="M3.5 3.5 H6.5 V6.5 H3.5 Z M3.5 3.5 V2 A1.5 1.5 0 1 0 2 3.5 H3.5 M6.5 3.5 V2 A1.5 1.5 0 1 1 8 3.5 H6.5 M3.5 6.5 V8 A1.5 1.5 0 1 1 2 6.5 H3.5 M6.5 6.5 V8 A1.5 1.5 0 1 0 8 6.5 H6.5" fill="none" stroke="#a5a4a9" stroke-width="1"/></svg>
<div class="mi" style="top:499.90px">Copy As</div><svg style="left:254px;top:505.20px" width="6" height="10" viewBox="0 0 6 10"><path d="M1.1 1 L5 5 L1.1 9" fill="none" stroke="#38383a" stroke-width="1.85"/></svg>
<div class="mi" style="top:520.90px">Paste</div><div class="kl" style="top:520.90px">V</div><svg style="left:235.0px;top:526.40px" width="10" height="10" viewBox="0 0 10 10"><path d="M3.5 3.5 H6.5 V6.5 H3.5 Z M3.5 3.5 V2 A1.5 1.5 0 1 0 2 3.5 H3.5 M6.5 3.5 V2 A1.5 1.5 0 1 1 8 3.5 H6.5 M3.5 6.5 V8 A1.5 1.5 0 1 1 2 6.5 H3.5 M6.5 6.5 V8 A1.5 1.5 0 1 0 8 6.5 H6.5" fill="none" stroke="#a5a4a9" stroke-width="1"/></svg>
<div class="sep" style="top:546.80px"></div>
<div class="mi" style="top:552.60px">Fitten Code - Add To Chat</div><div class="kl" style="top:552.60px">X</div><svg style="left:235.0px;top:558.10px" width="10" height="10" viewBox="0 0 10 10"><path d="M3.5 3.5 H6.5 V6.5 H3.5 Z M3.5 3.5 V2 A1.5 1.5 0 1 0 2 3.5 H3.5 M6.5 3.5 V2 A1.5 1.5 0 1 1 8 3.5 H6.5 M3.5 6.5 V8 A1.5 1.5 0 1 1 2 6.5 H3.5 M6.5 6.5 V8 A1.5 1.5 0 1 0 8 6.5 H6.5" fill="none" stroke="#a5a4a9" stroke-width="1"/></svg><svg style="left:223.0px;top:558.10px" width="9" height="10" viewBox="0 0 9 10"><path d="M.5 5 L4.5 1 L8.5 5" fill="none" stroke="#a5a4a9" stroke-width="1.1"/></svg>
<div class="mi" style="top:573.60px">Fitten Code - Document Code</div>
<div class="mi" style="top:594.60px">Fitten Code - Edit Code</div><div class="kl" style="top:594.60px">E</div><svg style="left:235.0px;top:600.10px" width="10" height="10" viewBox="0 0 10 10"><path d="M3.5 3.5 H6.5 V6.5 H3.5 Z M3.5 3.5 V2 A1.5 1.5 0 1 0 2 3.5 H3.5 M6.5 3.5 V2 A1.5 1.5 0 1 1 8 3.5 H6.5 M3.5 6.5 V8 A1.5 1.5 0 1 1 2 6.5 H3.5 M6.5 6.5 V8 A1.5 1.5 0 1 0 8 6.5 H6.5" fill="none" stroke="#a5a4a9" stroke-width="1"/></svg><svg style="left:223.0px;top:600.10px" width="9" height="10" viewBox="0 0 9 10"><path d="M.5 5 L4.5 1 L8.5 5" fill="none" stroke="#a5a4a9" stroke-width="1.1"/></svg>
<div class="mi" style="top:615.60px">Fitten Code - Explain Code</div>
<div class="mi" style="top:636.60px">Fitten Code - Find Bugs</div>
<div class="mi" style="top:657.60px">Fitten Code - Generate UnitTest</div>
<div class="mi" style="top:678.60px">Fitten Code - Optimize Code</div>
<div class="sep" style="top:704.50px"></div>
<div class="mi" style="top:710.30px">Open with Live Server [<span style="letter-spacing:-1.3px;font-size:12px">⌘</span>L <span style="letter-spacing:-1.3px;font-size:12px">⌘</span>O]</div>
<div class="mi" style="top:731.30px">Stop Live Server [<span style="letter-spacing:-1.3px;font-size:12px">⌘</span>L <span style="letter-spacing:-1.3px;font-size:12px">⌘</span>C]</div>
<div class="sep" style="top:757.20px"></div>
<div class="mi" style="top:763.00px">Command Palette...</div><div class="kl" style="top:763.00px">P</div><svg style="left:235.0px;top:768.50px" width="10" height="10" viewBox="0 0 10 10"><path d="M3.5 3.5 H6.5 V6.5 H3.5 Z M3.5 3.5 V2 A1.5 1.5 0 1 0 2 3.5 H3.5 M6.5 3.5 V2 A1.5 1.5 0 1 1 8 3.5 H6.5 M3.5 6.5 V8 A1.5 1.5 0 1 1 2 6.5 H3.5 M6.5 6.5 V8 A1.5 1.5 0 1 0 8 6.5 H6.5" fill="none" stroke="#a5a4a9" stroke-width="1"/></svg><svg style="left:221.0px;top:768.50px" width="11" height="10" viewBox="0 0 11 10"><path d="M5.5 .5 L10.3 5.3 H7.8 V9.3 H3.2 V5.3 H.7 Z" fill="none" stroke="#a5a4a9" stroke-width="1" stroke-linejoin="round"/></svg>
<div class="a" style="left:7px;top:1.5px;width:226.5px;height:28.5px;border:3px solid #f52f41;border-radius:2px"></div>
</div>
<div class="a" style="left:0;top:859px;width:1476px;height:1px;background:#ffffff"></div>
</body></html>
